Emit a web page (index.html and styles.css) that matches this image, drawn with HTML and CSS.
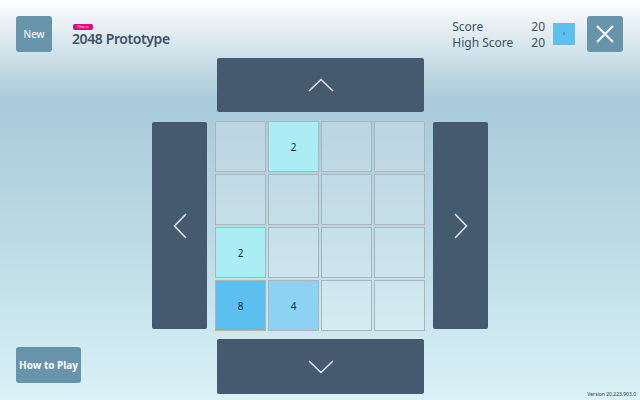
FILE: index.html
```html
<!DOCTYPE html>
<html lang="en">
  <head>
    <meta charset="UTF-8" />
    <meta name="viewport" content="width=device-width, initial-scale=1.0" />
    <title>2048 Prototype</title>
    <link rel="stylesheet" href="styles.css">
  </head>

  <body>
    <header class="top">
      <button class="tool new">New</button>
      <div class="title">
        <span class="badge">This is</span>
        <h1>2048 Prototype</h1>
      </div>
      <div class="scores">
        <span class="label">Score</span><span class="value">20</span>
        <span class="label">High Score</span><span class="value">20</span>
      </div>
      <div class="swatch">8</div>
      <button class="tool close" aria-label="Close">
        <svg width="20" height="20" viewBox="0 0 20 20">
          <path d="M2 2 L18 18 M18 2 L2 18" stroke="#fff" stroke-width="2" fill="none" />
        </svg>
      </button>
    </header>

    <main class="play">
      <aside class="side left">
        <button class="tool help">How to Play</button>
      </aside>

      <div class="board">
        <button class="move up" aria-label="Up">
          <svg width="26" height="14" viewBox="0 0 26 14">
            <path d="M1 13 L13 1.5 L25 13" />
          </svg>
        </button>
        <button class="move left" aria-label="Left">
          <svg width="14" height="26" viewBox="0 0 14 26">
            <path d="M13 1 L1.5 13 L13 25" />
          </svg>
        </button>
        <div class="tiles">
          <div class="cell"></div>
          <div class="cell t2">2</div>
          <div class="cell"></div>
          <div class="cell"></div>
          <div class="cell"></div>
          <div class="cell"></div>
          <div class="cell"></div>
          <div class="cell"></div>
          <div class="cell t2">2</div>
          <div class="cell"></div>
          <div class="cell"></div>
          <div class="cell"></div>
          <div class="cell t8">8</div>
          <div class="cell t4">4</div>
          <div class="cell"></div>
          <div class="cell"></div>
        </div>
        <button class="move right" aria-label="Right">
          <svg width="14" height="26" viewBox="0 0 14 26">
            <path d="M1 1 L12.5 13 L1 25" />
          </svg>
        </button>
        <button class="move down" aria-label="Down">
          <svg width="26" height="14" viewBox="0 0 26 14">
            <path d="M1 1 L13 12.5 L25 1" />
          </svg>
        </button>
      </div>

      <aside class="side right">
        <span class="version">Version 20.223.903.0</span>
      </aside>
    </main>
  </body>
</html>
```

FILE: styles.css
```css
body {
  font-family: "Noto Sans", "Open Sans", sans-serif;
  margin: 0;
  padding: 0;
  height: 400px;
  overflow: hidden;
  display: flex;
  flex-direction: column;
  background: linear-gradient(to bottom, #fdfefe 0, #e6eff3 28px, #a8cada 100px, #bad9e4 230px, #d9f2f7 400px);
  color: #3d5166;
}

button {
  font-family: inherit;
  border: none;
  padding: 0;
  cursor: pointer;
}

.top {
  display: flex;
  align-items: center;
  height: 36px;
  padding: 16px 17px 6px 16px;
}

.tool {
  background-color: #6894ab;
  color: #fff;
  border-radius: 3px;
  font-size: 10px;
}

.new {
  width: 36px;
  height: 36px;
}

.title {
  display: flex;
  flex-direction: column;
  align-items: flex-start;
  margin-left: 20px;
  margin-top: 4px;
  flex: 1;
}

.badge {
  background-color: #e6007e;
  color: #fff;
  font-size: 4px;
  line-height: 6px;
  padding: 0 4px;
  border-radius: 2px;
  margin-left: 1px;
}

h1 {
  margin: 0;
  font-size: 14px;
  font-weight: 600;
  letter-spacing: -0.4px;
  line-height: 18px;
}

.scores {
  display: grid;
  grid-template-columns: 79px auto;
  font-size: 12px;
  line-height: 16px;
  margin-top: 2px;
}

.value {
  text-align: right;
}

.swatch {
  width: 22px;
  height: 22px;
  margin-left: 8px;
  background-color: #5bbfef;
  border: 1px solid #74b8d8;
  box-sizing: border-box;
  color: #2a6a8a;
  font-size: 3px;
  display: flex;
  align-items: center;
  justify-content: center;
}

.close {
  width: 36px;
  height: 36px;
  margin-left: 12px;
  display: flex;
  align-items: center;
  justify-content: center;
}

.play {
  flex: 1;
  display: flex;
}

/* both sides carry 16px of padding so the board stays centred */
.side {
  flex: 1;
  display: flex;
  flex-direction: column;
  justify-content: flex-end;
}

.side.left {
  align-items: flex-start;
  padding: 0 0 17px 16px;
}

.help {
  width: 65px;
  height: 36px;
  font-weight: 700;
}

.side.right {
  align-items: flex-end;
  padding: 0 4px 3px 12px;
}

.version {
  font-size: 5px;
  color: #333;
  white-space: nowrap;
}

.board {
  display: grid;
  grid-template-columns: 55px 210px 55px;
  grid-template-rows: 55px 210px 55px;
  gap: 8px;
}

.move {
  background-color: #455a6e;
  border-radius: 2px;
  display: flex;
  align-items: center;
  justify-content: center;
}

.move svg path {
  fill: none;
  stroke: #dde3e8;
  stroke-width: 1.6;
}

.move.up {
  grid-column: 2;
  grid-row: 1;
  margin: 0 1px 1px 2px;
}

.move.left {
  grid-column: 1;
  grid-row: 2;
  margin: 1px 0 2px 0;
}

.move.right {
  grid-column: 3;
  grid-row: 2;
  margin: 1px 0 2px 0;
}

.move.down {
  grid-column: 2;
  grid-row: 3;
  margin: 0 1px 0 2px;
}

.tiles {
  grid-column: 2;
  grid-row: 2;
  display: grid;
  grid-template-columns: repeat(4, 51px);
  grid-template-rows: repeat(4, 51px);
  gap: 2px;
}

.cell {
  box-sizing: border-box;
  border: 1px solid #a9b7bc;
  background-color: rgba(255, 255, 255, 0.18);
  display: flex;
  align-items: center;
  justify-content: center;
  font-size: 10px;
  color: #1c2b36;
}

.t2 {
  background-color: #abedf4;
}

.t4 {
  background-color: #8dd1f3;
}

.t8 {
  background-color: #5bbfef;
}
```
